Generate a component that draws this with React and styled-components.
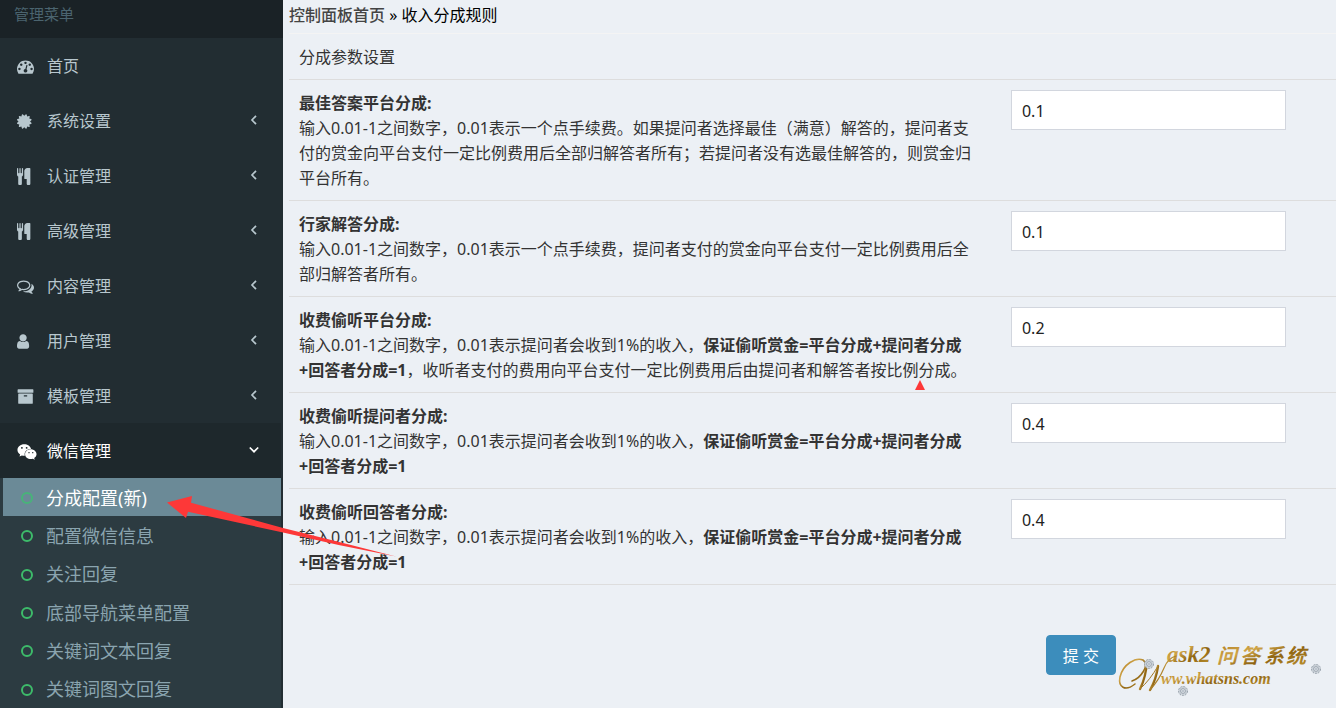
import React from 'react';
import styled, { createGlobalStyle } from 'styled-components';
import { FaWeixin } from 'react-icons/fa';

const GlobalStyle = createGlobalStyle`
  * { box-sizing: border-box; }
  body {
    margin: 0;
    background: #ecf0f5;
    color: #333;
    font: 16px/25px "Noto Sans", "Noto Sans CJK SC", sans-serif;
  }
  input, button { font: inherit; }
`;

const Page = styled.div`
  position: relative;
  display: flex;
  min-height: 100vh;
  overflow: hidden;
`;

const Sidebar = styled.nav`
  flex: 0 0 283px;
  background: #222d32;
`;

const SidebarTitle = styled.div`
  height: 38px;
  padding: 2px 14px;
  background: #1a2226;
  color: #4b646f;
  font-size: 15px;
`;

const Menu = styled.ul`
  margin: 0;
  padding: 0;
  list-style: none;
`;

const MenuLink = styled.a`
  display: flex;
  align-items: center;
  height: 55px;
  margin-right: 2px;
  padding: 2px 22px 0 17px;
  background: ${({ $open }) => ($open ? '#1e282c' : 'transparent')};
  color: ${({ $open }) => ($open ? '#fff' : '#b8c7ce')};
  text-decoration: none;
`;

const MenuIcon = styled.span`
  display: flex;
  width: 30px;
`;

const MenuLabel = styled.span`
  flex: 1;
`;

const SubMenu = styled.ul`
  display: grid;
  grid-auto-rows: 1fr;
  min-height: 230px;
  margin: 0 2px 0 0;
  padding: 0 0 0 3px;
  list-style: none;
  background: #2c3b41;
`;

const SubLink = styled.a`
  display: flex;
  align-items: center;
  gap: 13px;
  height: 100%;
  padding: 2px 0 0 18px;
  background: ${({ $active }) => ($active ? '#6b8a97' : 'transparent')};
  color: ${({ $active }) => ($active ? '#fff' : '#8aa4af')};
  font-size: 18px;
  text-decoration: none;
`;

const Ring = styled.span`
  width: 12px;
  height: 12px;
  border: 2px solid ${({ $active }) => ($active ? '#48b379' : '#3dbb6a')};
  border-radius: 50%;
`;

const Main = styled.main`
  flex: 1;
  min-width: 0;
  padding-left: 6px;
`;

const Breadcrumb = styled.div`
  padding: 3px 0 5px;
  border-bottom: 1px solid #f4f4f4;
  color: #000;
`;

const HomeLink = styled.a`
  color: #444;
  font-weight: 500;
  text-decoration: none;
`;

const SectionTitle = styled.div`
  padding: 11px 10px 9px;
  border-bottom: 1px solid #ddd;
`;

const Row = styled.div`
  display: grid;
  grid-template-columns: minmax(0, 17fr) minmax(0, 8fr);
  border-bottom: 1px solid #ddd;
`;

const Description = styled.div`
  padding: 11px 20px 9px 10px;
`;

const FieldLabel = styled.label`
  display: block;
  font-weight: 700;
`;

const FieldCell = styled.div`
  padding: 10px;
`;

const Field = styled.input`
  width: 275px;
  max-width: 100%;
  height: 40px;
  padding: 2px 10px 0;
  border: 1px solid #d2d6de;
  border-radius: 0;
  background: #fff;
  color: #222;
`;

const Actions = styled.div`
  display: grid;
  grid-template-columns: minmax(0, 17fr) minmax(0, 8fr);
  padding-top: 50px;
`;

const Submit = styled.button`
  grid-column: 2;
  width: 70px;
  height: 40px;
  margin-left: 45px;
  padding: 2px 0 0;
  border: 1px solid #3c8dbc;
  border-radius: 4px;
  background: #3c8dbc;
  color: #fff;
`;

const Annotations = styled.svg`
  position: absolute;
  top: 0;
  left: 0;
  pointer-events: none;
`;

const Watermark = styled.svg`
  position: absolute;
  right: 10px;
  bottom: 8px;
  pointer-events: none;
`;

const ICONS = {
  dashboard: [0, 'M384 1152q0-53-37.5-90.5t-90.5-37.5-90.5 37.5-37.5 90.5 37.5 90.5 90.5 37.5 90.5-37.5 37.5-90.5zm192-448q0-53-37.5-90.5t-90.5-37.5-90.5 37.5-37.5 90.5 37.5 90.5 90.5 37.5 90.5-37.5 37.5-90.5zm428 481l101-382q6-26-7.5-48.5t-38.5-29.5-48 6.5-30 39.5l-101 382q-60 5-107 43.5t-63 98.5q-20 77 20 146t117 89 146-20 89-117q16-60-6-117t-72-91zm660-33q0-53-37.5-90.5t-90.5-37.5-90.5 37.5-37.5 90.5 37.5 90.5 90.5 37.5 90.5-37.5 37.5-90.5zm-640-640q0-53-37.5-90.5t-90.5-37.5-90.5 37.5-37.5 90.5 37.5 90.5 90.5 37.5 90.5-37.5 37.5-90.5zm448 192q0-53-37.5-90.5t-90.5-37.5-90.5 37.5-37.5 90.5 37.5 90.5 90.5 37.5 90.5-37.5 37.5-90.5zm320 448q0 261-141 483-19 29-54 29h-1402q-35 0-54-29-141-221-141-483 0-182 71-348t191-286 286-191 348-71 348 71 286 191 191 286 71 348z'],
  certificate: [128, 'M1504 896l138 135q30 28 20 70-12 41-52 51l-188 48 53 186q12 41-19 70-29 31-70 19l-186-53-48 188q-10 40-51 52-12 2-19 2-31 0-51-22l-135-138-135 138q-28 30-70 20-41-11-51-52l-48-188-186 53q-41 12-70-19-31-29-19-70l53-186-188-48q-40-10-52-51-10-42 20-70l138-135-138-135q-30-28-20-70 12-41 52-51l188-48-53-186q-12-41 19-70 29-31 70-19l186 53 48-188q10-41 51-51 41-12 70 19l135 139 135-139q29-30 70-19 41 10 51 51l48 188 186-53q41-12 70 19 31 29 19 70l-53 186 188 48q40 10 52 51 10 42-20 70z'],
  cutlery: [192, 'M832 64v640q0 61-35.5 111t-92.5 70v779q0 52-38 90t-90 38h-128q-52 0-90-38t-38-90v-779q-57-20-92.5-70t-35.5-111v-640q0-26 19-45t45-19 45 19 19 45v416q0 26 19 45t45 19 45-19 19-45v-416q0-26 19-45t45-19 45 19 19 45v416q0 26 19 45t45 19 45-19 19-45v-416q0-26 19-45t45-19 45 19 19 45zm768 0v1600q0 52-38 90t-90 38h-128q-52 0-90-38t-38-90v-512h-224q-13 0-22.5-9.5t-9.5-22.5v-800q0-132 94-226t226-94h256q26 0 45 19t19 45z'],
  comments: [0, 'M704 384q-153 0-286 52t-211.5 141-78.5 191q0 82 53 158t149 132l97 56-35 84q34-20 62-39l44-31 53 10q78 14 153 14 153 0 286-52t211.5-141 78.5-191-78.5-191-211.5-141-286-52zm0-128q191 0 353.5 68.5t256.5 186.5 94 257-94 257-256.5 186.5-353.5 68.5q-86 0-176-16-124 88-278 128-36 9-86 16h-3q-11 0-20.5-8t-11.5-21q-1-3-1-6.5t.5-6.5 2-6l2.5-5 3.5-5.5 4-5 4.5-5 4-4.5q5-6 23-25t26-29.5 22.5-29 25-38.5 20.5-44q-124-72-195-177t-71-224q0-139 94-257t256.5-186.5 353.5-68.5zm822 1169q10 24 20.5 44t25 38.5 22.5 29 26 29.5 23 25q1 1 4 4.5t4.5 5 4 5 3.5 5.5l2.5 5 2 6 .5 6.5-1 6.5q-3 14-13 22t-22 7q-50-7-86-16-154-40-278-128-90 16-176 16-271 0-472-132 58 4 88 4 161 0 309-45t264-129q125-92 192-212t67-254q0-77-23-152 129 71 204 178t75 230q0 120-71 224.5t-195 176.5z'],
  user: [256, 'M1536 1399q0 109-62.5 187t-150.5 78h-854q-88 0-150.5-78t-62.5-187q0-85 8.5-160.5t31.5-152 58.5-131 94-89 134.5-34.5q131 128 313 128t313-128q76 0 134.5 34.5t94 89 58.5 131 31.5 152 8.5 160.5zm-256-887q0 159-112.5 271.5t-271.5 112.5-271.5-112.5-112.5-271.5 112.5-271.5 271.5-112.5 271.5 112.5 112.5 271.5z'],
  archive: [0, 'M1088 832q0-26-19-45t-45-19h-256q-26 0-45 19t-19 45 19 45 45 19h256q26 0 45-19t19-45zm576-192v960q0 26-19 45t-45 19h-1408q-26 0-45-19t-19-45v-960q0-26 19-45t45-19h1408q26 0 45 19t19 45zm64-448v256q0 26-19 45t-45 19h-1536q-26 0-45-19t-19-45v-256q0-26 19-45t45-19h1536q26 0 45 19t19 45z'],
};

function Glyph({ name }) {
  if (name === 'weixin') return <FaWeixin size={20} />;
  const [left, d] = ICONS[name];
  return (
    <svg width="17" height="17" viewBox={`${left} 0 1792 1792`} fill="currentColor" aria-hidden="true">
      <path d={d} />
    </svg>
  );
}

function Chevron({ open }) {
  return (
    <svg width="10" height="14" viewBox="0 0 10 14" fill="none" stroke="currentColor" strokeWidth="1.7" aria-hidden="true">
      <path d={open ? 'M.8 2.5 5 6.7 9.2 2.5' : 'M7 .8 3 5 7 9.2'} />
    </svg>
  );
}

const MENU = [
  { icon: 'dashboard', label: '首页' },
  { icon: 'certificate', label: '系统设置', expandable: true },
  { icon: 'cutlery', label: '认证管理', expandable: true },
  { icon: 'cutlery', label: '高级管理', expandable: true },
  { icon: 'comments', label: '内容管理', expandable: true },
  { icon: 'user', label: '用户管理', expandable: true },
  { icon: 'archive', label: '模板管理', expandable: true },
  {
    icon: 'weixin',
    label: '微信管理',
    expandable: true,
    children: ['分成配置(新)', '配置微信信息', '关注回复', '底部导航菜单配置', '关键词文本回复', '关键词图文回复'],
  },
];

const formula = <b>保证偷听赏金=平台分成+提问者分成+回答者分成=1</b>;
const shared = '输入0.01-1之间数字，0.01表示提问者会收到1%的收入，';

const FIELDS = [
  {
    id: 'best',
    label: '最佳答案平台分成:',
    value: '0.1',
    text: '输入0.01-1之间数字，0.01表示一个点手续费。如果提问者选择最佳（满意）解答的，提问者支付的赏金向平台支付一定比例费用后全部归解答者所有；若提问者没有选最佳解答的，则赏金归平台所有。',
  },
  {
    id: 'expert',
    label: '行家解答分成:',
    value: '0.1',
    text: '输入0.01-1之间数字，0.01表示一个点手续费，提问者支付的赏金向平台支付一定比例费用后全部归解答者所有。',
  },
  {
    id: 'platform',
    label: '收费偷听平台分成:',
    value: '0.2',
    text: <>{shared}{formula}，收听者支付的费用向平台支付一定比例费用后由提问者和解答者按比例分成。</>,
  },
  { id: 'asker', label: '收费偷听提问者分成:', value: '0.4', text: <>{shared}{formula}</> },
  { id: 'answerer', label: '收费偷听回答者分成:', value: '0.4', text: <>{shared}{formula}</> },
];

function Gem({ x, y }) {
  return (
    <g transform={`translate(${x} ${y})`}>
      <circle r="4.5" fill="#d4dae0" stroke="#98a2ac" strokeDasharray="2 1" />
      <circle r="2.4" fill="#eef2f5" stroke="#87929d" strokeWidth=".8" />
      <path d="M-4 0H4M0-4V4M-3-3 3 3M3-3-3 3" stroke="#a9b3bd" strokeWidth=".5" />
    </g>
  );
}

function Logo() {
  return (
    <Watermark width="210" height="66" viewBox="0 0 210 66" role="img" aria-label="ask2问答系统 Www.whatsns.com">
      <defs>
        <linearGradient id="gold" x1="0" y1="0" x2="1" y2="1">
          <stop offset="0" stopColor="#a8741c" />
          <stop offset=".35" stopColor="#d0a548" />
          <stop offset=".6" stopColor="#8f6412" />
          <stop offset="1" stopColor="#c49a34" />
        </linearGradient>
      </defs>
      <g fill="url(#gold)">
        <text x="51" y="28" fontSize="23" fontWeight="700" fontStyle="italic" fontFamily="Liberation Serif, serif">ask2</text>
        <text x="101 124 148 170" y="29" fontSize="20" fontWeight="700" fontStyle="italic" fontFamily="Noto Sans CJK SC, sans-serif">问答系统</text>
        <text x="45" y="50" fontSize="16" fontWeight="700" fontStyle="italic" fontFamily="Liberation Serif, serif">ww.whatsns.com</text>
      </g>
      <g fill="none" stroke="url(#gold)" strokeWidth="1.6" strokeLinecap="round">
        <path d="M19 50C9 58 2 53 4 43C7 30 20 23 27 26C34 31 25 44 16 47" />
        <path d="M31 27Q30 43 24 55" strokeWidth="2.4" />
        <path d="M24 55Q34 46 42 32" strokeWidth="1" />
        <path d="M42 32Q40 46 34 56" strokeWidth="2.4" />
        <path d="M34 56Q43 46 48 34Q52 24 60 22" strokeWidth="1.2" />
      </g>
      <Gem x={33} y={30} />
      <Gem x={67} y={57} />
      <Gem x={200} y={35} />
    </Watermark>
  );
}

export default function App() {
  return (
    <>
      <GlobalStyle />
      <Page>
        <Sidebar aria-label="管理菜单">
          <SidebarTitle>管理菜单</SidebarTitle>
          <Menu>
            {MENU.map(({ icon, label, expandable, children }) => (
              <li key={label}>
                <MenuLink href="#" $open={Boolean(children)}>
                  <MenuIcon><Glyph name={icon} /></MenuIcon>
                  <MenuLabel>{label}</MenuLabel>
                  {expandable && <Chevron open={Boolean(children)} />}
                </MenuLink>
                {children && (
                  <SubMenu>
                    {children.map((item, i) => (
                      <li key={item}>
                        <SubLink href="#" $active={i === 0}>
                          <Ring $active={i === 0} />
                          {item}
                        </SubLink>
                      </li>
                    ))}
                  </SubMenu>
                )}
              </li>
            ))}
          </Menu>
        </Sidebar>
        <Main>
          <Breadcrumb>
            <HomeLink href="#">控制面板首页</HomeLink> » 收入分成规则
          </Breadcrumb>
          <form onSubmit={(e) => e.preventDefault()}>
            <SectionTitle>分成参数设置</SectionTitle>
            {FIELDS.map(({ id, label, value, text }) => (
              <Row key={id}>
                <Description>
                  <FieldLabel htmlFor={id}>{label}</FieldLabel>
                  {text}
                </Description>
                <FieldCell>
                  <Field id={id} type="text" defaultValue={value} />
                </FieldCell>
              </Row>
            ))}
            <Actions>
              <Submit type="submit">提 交</Submit>
            </Actions>
          </form>
        </Main>
        <Annotations width="960" height="600" viewBox="0 0 960 600" fill="#fd3838" aria-hidden="true">
          <path d="M167 502.5 192 496 191 502.7 283 528Q340 542 396 556.5Q340 546 283 532.5L188 511.7 186 518z" />
          <path d="M920 380 925 390H915z" />
        </Annotations>
        <Logo />
      </Page>
    </>
  );
}
